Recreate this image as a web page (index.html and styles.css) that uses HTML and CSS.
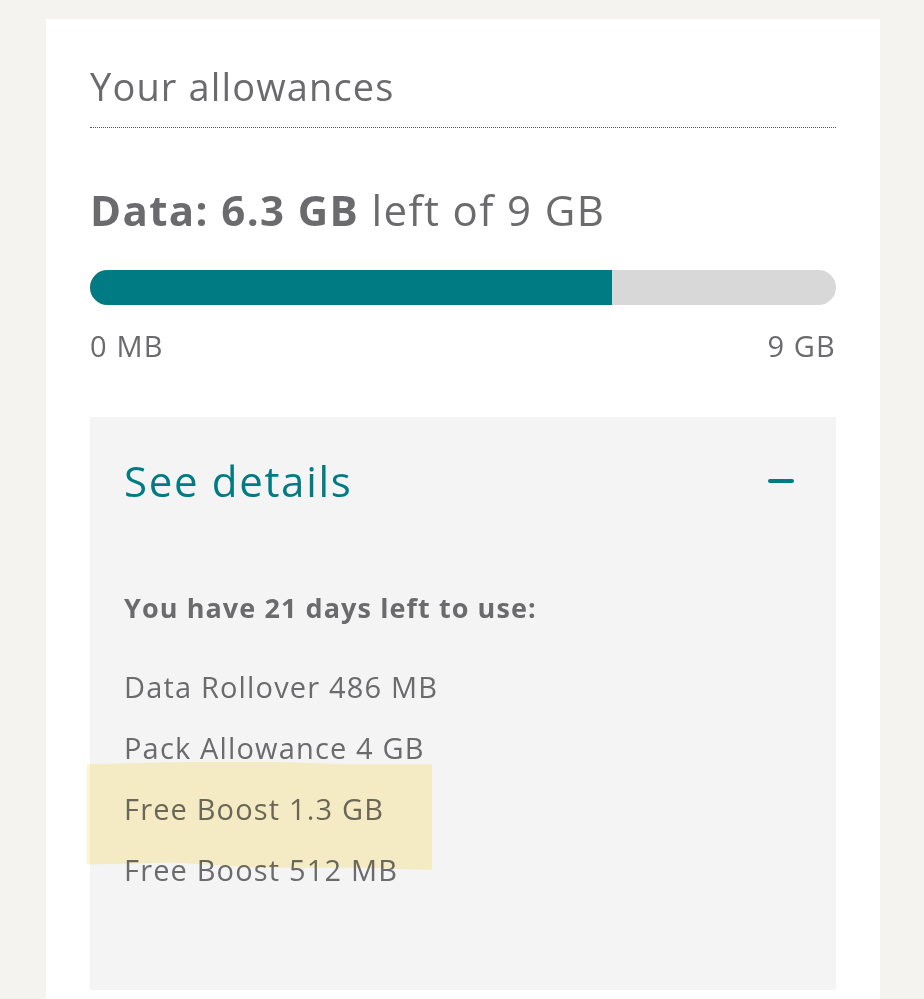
FILE: index.html
```html
<!DOCTYPE html>
<html lang="en">
<head>
    <meta charset="UTF-8">
    <meta name="viewport" content="width=device-width, initial-scale=1.0">
    <title>Your allowances</title>
    <link rel="stylesheet" href="styles.css">
</head>
<body>

    <div class="page">
        <section class="card">
            <h2 class="title">Your allowances</h2>

            <h3 class="dataHeading"><strong>Data: 6.3 GB</strong> left of 9 GB</h3>

            <div class="bar">
                <div class="barFill" style="width: 70%;"></div>
            </div>
            <div class="scale">
                <span>0 MB</span>
                <span>9 GB</span>
            </div>

            <div class="details">
                <div class="detailsHeader">
                    <span class="detailsLink">See details</span>
                    <span class="minus"></span>
                </div>

                <p class="daysLeft">You have 21 days left to use:</p>

                <ul class="allowanceList">
                    <li>Data Rollover 486 MB</li>
                    <li>Pack Allowance 4 GB</li>
                    <li>Free Boost 1.3 GB</li>
                    <li>Free Boost 512 MB</li>
                </ul>

                <!-- marcador amarillo encima -->
                <div class="highlight"></div>
            </div>
        </section>
    </div>

</body>
</html>
```

FILE: styles.css
```css
body {
    font-family: "Open Sans", "DejaVu Sans", sans-serif;
    margin: 0;
    padding: 0;
    background-color: #f4f3ef;
    color: #6b6b6e;
}

.page {
    padding: 19px 44px 0 46px;
}

.card {
    background-color: #fff;
    padding: 44px 44px 10px 44px;
    min-height: 960px;
    box-sizing: border-box;
}

.title {
    font-size: 38px;
    font-weight: 400;
    letter-spacing: 0.03em;
    margin: 0;
    line-height: 46px;
    padding-bottom: 18px;
    border-bottom: 1px dotted #555;
}

.dataHeading {
    font-size: 42px;
    font-weight: 400;
    letter-spacing: 0.033em;
    margin: 57px 0 0 0;
    line-height: 50px;
}

.dataHeading strong {
    font-weight: 700;
}

.bar {
    height: 35px;
    margin-top: 35px;
    background-color: #d8d8d8;
    border-radius: 18px;
    overflow: hidden;
}

.barFill {
    height: 100%;
    background-color: #007b84;
}

.scale {
    display: flex;
    justify-content: space-between;
    font-size: 29px;
    letter-spacing: 0.04em;
    line-height: 36px;
    margin-top: 23px;
}

.details {
    position: relative;
    background-color: #f4f4f4;
    margin-top: 53px;
    padding: 39px 42px 90px 34px;
}

.detailsHeader {
    display: flex;
    justify-content: space-between;
    align-items: center;
}

.detailsLink {
    color: #007b84;
    font-size: 42px;
    letter-spacing: 0.04em;
    line-height: 50px;
}

.minus {
    width: 26px;
    height: 4px;
    border-radius: 2px;
    background-color: #007b84;
}

.daysLeft {
    font-size: 27px;
    font-weight: 700;
    letter-spacing: 0.04em;
    margin: 85px 0 0 0;
    line-height: 34px;
}

.allowanceList {
    list-style: none;
    margin: 31px 0 0 0;
    padding: 0;
    font-size: 29px;
    letter-spacing: 0.04em;
}

.allowanceList li {
    line-height: 61px;
}

.highlight {
    position: absolute;
    left: -3px;
    top: 345px;
    width: 345px;
    height: 108px;
    background-color: #fff5cc;
    mix-blend-mode: multiply;
    clip-path: polygon(0 2%, 30% 0, 55% 0, 75% 2%, 100% 2%, 100% 100%, 80% 98%, 50% 98%, 25% 93%, 0 95%);
}
```
